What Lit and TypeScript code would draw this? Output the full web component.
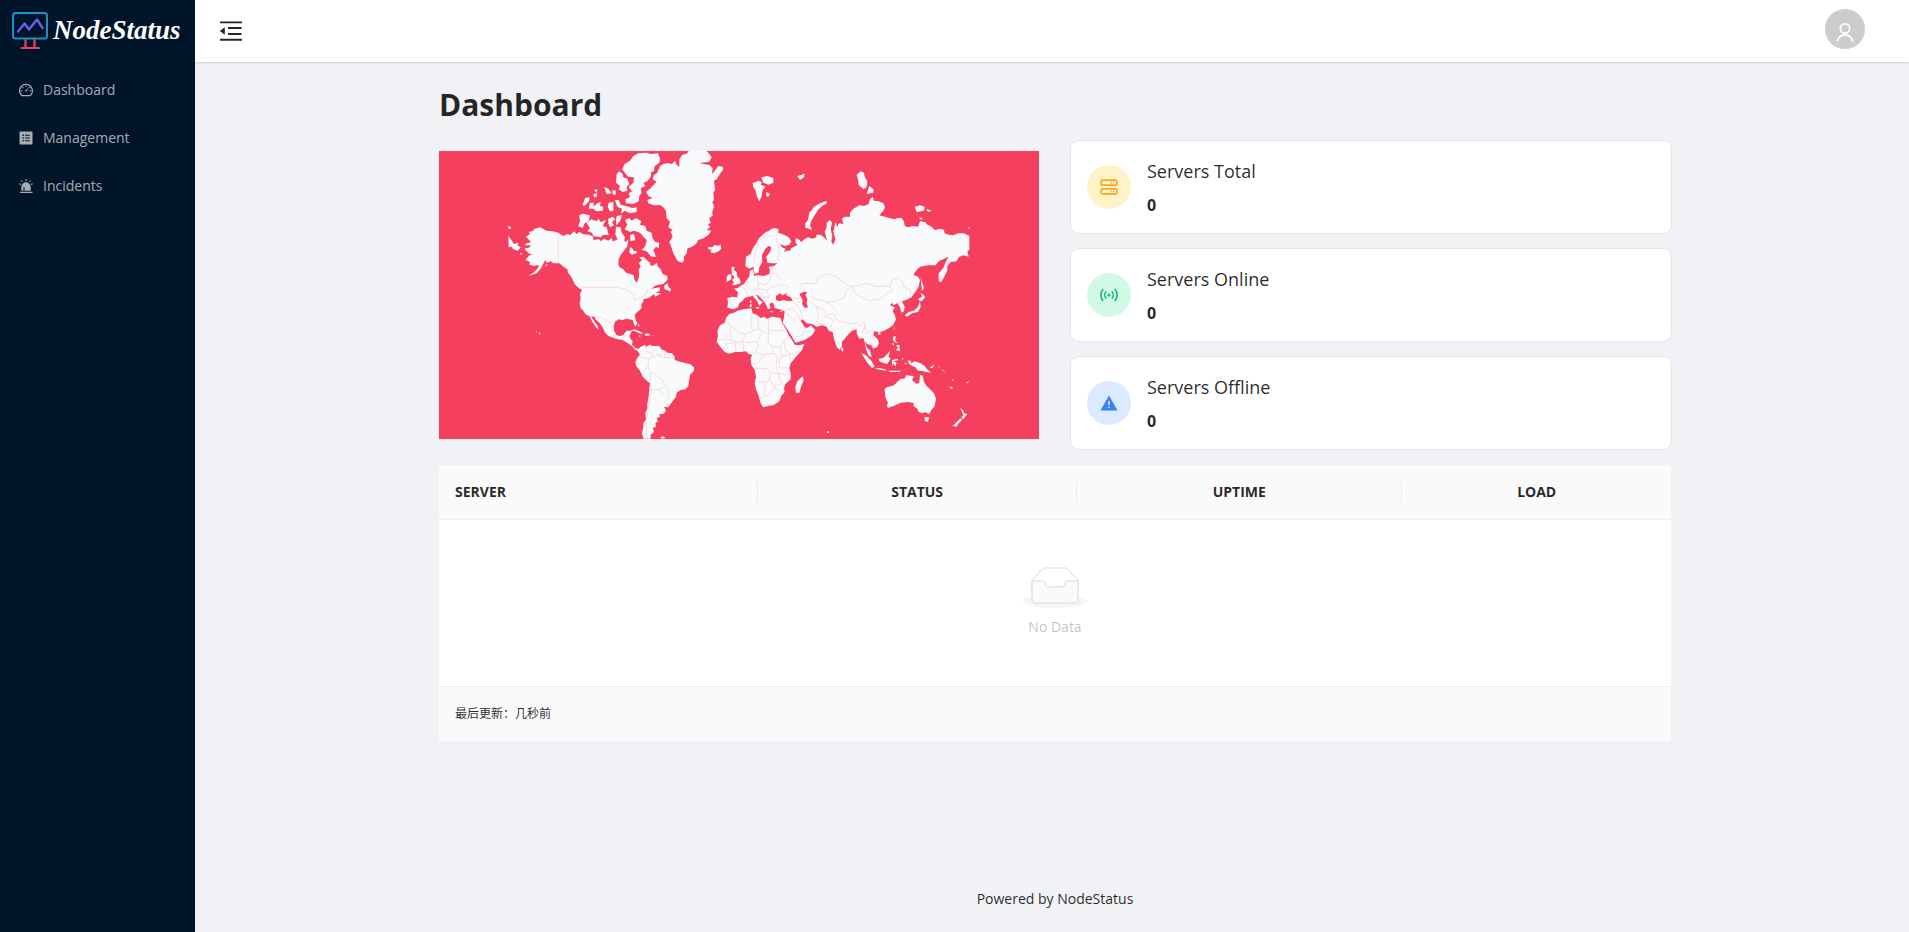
import { LitElement, html, svg, css } from "lit";
import { customElement, property } from "lit/decorators.js";

const dashboardIcon = svg`<svg class="icon" viewBox="0 0 1024 1024" aria-hidden="true"><path fill="currentColor" d="M924.8 385.6a446.7 446.7 0 00-96-142.4 446.7 446.7 0 00-142.4-96C631.1 123.8 572.5 112 512 112s-119.1 11.8-174.4 35.2a446.7 446.7 0 00-142.4 96 446.7 446.7 0 00-96 142.4C75.8 440.9 64 499.5 64 560c0 132.7 58.3 257.7 159.9 343.1l1.7 1.4c5.8 4.8 13.1 7.5 20.6 7.5h531.7c7.5 0 14.8-2.7 20.6-7.5l1.7-1.4C901.7 817.7 960 692.7 960 560c0-60.5-11.9-119.1-35.2-174.4zM761.4 836H262.6A371.12 371.12 0 01140 560c0-99.4 38.7-192.8 109-263 70.3-70.3 163.7-109 263-109 99.4 0 192.8 38.7 263 109 70.3 70.3 109 163.7 109 263 0 105.6-44.5 205.5-122.6 276zM623.5 421.5a8.03 8.03 0 00-11.3 0L527.7 506c-18.7-5-39.4-.2-54.1 14.5a55.95 55.95 0 000 79.2 55.95 55.95 0 0079.2 0 55.87 55.87 0 0014.5-54.1l84.5-84.5c3.1-3.1 3.1-8.2 0-11.3l-28.3-28.3zM490 320h44c4.4 0 8-3.6 8-8v-80c0-4.4-3.6-8-8-8h-44c-4.4 0-8 3.6-8 8v80c0 4.4 3.6 8 8 8zm260 218v44c0 4.4 3.6 8 8 8h80c4.4 0 8-3.6 8-8v-44c0-4.4-3.6-8-8-8h-80c-4.4 0-8 3.6-8 8zm12.7-197.2l-31.1-31.1a8.03 8.03 0 00-11.3 0l-56.6 56.6a8.03 8.03 0 000 11.3l31.1 31.1c3.1 3.1 8.2 3.1 11.3 0l56.6-56.6c3.1-3.1 3.1-8.2 0-11.3zm-458.6-31.1a8.03 8.03 0 00-11.3 0l-31.1 31.1a8.03 8.03 0 000 11.3l56.6 56.6c3.1 3.1 8.2 3.1 11.3 0l31.1-31.1c3.1-3.1 3.1-8.2 0-11.3l-56.6-56.6zM262 530h-80c-4.4 0-8 3.6-8 8v44c0 4.4 3.6 8 8 8h80c4.4 0 8-3.6 8-8v-44c0-4.4-3.6-8-8-8z"/></svg>`;

const managementIcon = svg`<svg class="icon" viewBox="0 0 16 16" aria-hidden="true"><path fill="currentColor" fill-rule="evenodd" d="M2 1.5h12a.5.5 0 0 1 .5.5v12a.5.5 0 0 1-.5.5H2a.5.5 0 0 1-.5-.5V2a.5.5 0 0 1 .5-.5zM4.5 4.6v1.3h1.4V4.6zM7 4.8v1h4.8v-1zM4.500 7.300v1.300h1.400V7.300zM7 7.500v1h4.800v-1zM4.500 10v1.300h1.400V10zM7 10.200v1h4.800v-1z"/></svg>`;

const incidentsIcon = svg`<svg class="icon" viewBox="0 0 16 16" aria-hidden="true"><path fill="currentColor" fill-rule="evenodd" d="M3.300 12.800V9a4.700 4.700 0 0 1 9.400 0v3.800zM5.500 12.800h1V9H5.500zM2 13.700h12.500v1.300H2z"/><path fill="none" stroke="currentColor" stroke-width="1.100" d="M8 1v2M3.300 2.500l1.200 1.500M12.700 2.500l-1.200 1.500M1.300 5.700l1.700.7M14.700 5.700l-1.700.7"/></svg>`;

const foldIcon = svg`<svg class="fold-icon" viewBox="0 0 1024 1024" aria-hidden="true"><path fill="currentColor" d="M408 442h480c4.400 0 8-3.600 8-8v-56c0-4.400-3.600-8-8-8H408c-4.400 0-8 3.600-8 8v56c0 4.400 3.600 8 8 8zm-8 204c0 4.400 3.600 8 8 8h480c4.400 0 8-3.600 8-8v-56c0-4.400-3.600-8-8-8H408c-4.400 0-8 3.600-8 8v56zm504-486H120c-4.400 0-8 3.600-8 8v56c0 4.400 3.600 8 8 8h784c4.400 0 8-3.600 8-8v-56c0-4.400-3.600-8-8-8zm0 632H120c-4.400 0-8 3.600-8 8v56c0 4.400 3.600 8 8 8h784c4.400 0 8-3.600 8-8v-56c0-4.400-3.600-8-8-8zM115.400 518.900L271.700 642c5.800 4.600 14.400.5 14.400-6.900V388.900c0-7.400-8.500-11.500-14.400-6.900L115.400 505.100a8.740 8.740 0 0 0 0 13.800z"/></svg>`;

const logoMark = svg`<svg class="logo-mark" viewBox="0 0 36 38" aria-hidden="true" fill="none" stroke-linejoin="round" stroke-linecap="round"><rect x="1" y="1" width="34" height="25.500" rx="2.500" stroke="#1d8fc4" stroke-width="2"/><path d="M6 19.500L12.500 11.500l4.500 6 8-10 5.500 8.500" stroke="#6c5ce7" stroke-width="2.400"/><path d="M13.500 28v7.500M22.500 28v7.500M9.500 36h17.500" stroke="#e8435c" stroke-width="2.200"/></svg>`;

const serverIcon = svg`<svg class="stat-icon" viewBox="0 0 18 18" aria-hidden="true" fill="none" stroke="currentColor" stroke-width="1.700"><rect x="1.200" y="2.200" width="15.600" height="5" rx="1"/><rect x="1.200" y="10.800" width="15.600" height="5" rx="1"/><path d="M10.500 4.700h1.300M13 4.700h1.300M10.500 13.300h1.300M13 13.300h1.300"/></svg>`;

const signalIcon = svg`<svg class="stat-icon" viewBox="0 0 18 18" aria-hidden="true" fill="none" stroke="currentColor" stroke-width="1.600"><circle cx="9" cy="9" r="1.500" fill="currentColor" stroke="none"/><path d="M6.200 5.500a5 5 0 0 0 0 7M11.800 5.500a5 5 0 0 1 0 7M3.200 3a9 9 0 0 0 0 12M14.800 3a9 9 0 0 1 0 12"/></svg>`;

const warnIcon = svg`<svg class="stat-icon" viewBox="0 0 18 18" aria-hidden="true"><path fill="currentColor" d="M9 1.500L17.600 16.500H.4z"/><path d="M9 7v4M9 12.500v1.600" stroke="#dbeafe" stroke-width="1.500"/></svg>`;

const emptyIcon = svg`<svg class="empty-icon" viewBox="0 0 64 41" aria-hidden="true"><g transform="translate(0 1)" fill="none" fill-rule="evenodd"><ellipse fill="#f5f5f5" cx="32" cy="33" rx="32" ry="7"/><g stroke="#d9d9d9"><path d="M55 12.760L44.854 1.258C44.367.474 43.656 0 42.907 0H21.093c-.749 0-1.460.474-1.947 1.257L9 12.761V22h46v-9.240z"/><path fill="#fafafa" d="M41.613 15.931c0-1.605.994-2.930 2.227-2.931H55v18.137C55 33.260 53.680 35 52.050 35h-40.100C10.320 35 9 33.259 9 31.137V13h11.160c1.233 0 2.227 1.323 2.227 2.928v.022c0 1.605 1.005 2.901 2.237 2.901h14.752c1.232 0 2.237-1.308 2.237-2.913v-.007z"/></g></g></svg>`;

/* Land outlines of the western hemisphere. */
const west = [
  // Greenland
  "M648 155L660 146 680 125 668 118 672 104 682 98 690 78 702 71 715 70 726 72 735 62 740 74 748 80 748 58 756 46 772 40 776 33 830 33 838 42 845 52 838 65 808 69 838 75 848 84 846 102 856 90 865 78 878 80 880 88 870 102 860 118 852 122 855 150 850 158 852 180 847 186 852 200 846 218 849 226 838 235 842 250 834 252 840 262 830 270 844 272 836 284 822 294 805 300 798 312 790 318 772 326 770 340 762 350 762 362 756 368 742 362 736 350 730 340 724 322 718 306 728 290 722 275 728 270 715 262 720 245 710 235 708 212 700 202 690 195 672 196 655 190 652 180 668 174 655 168z",
  // Ellesmere and Axel Heiberg
  "M576 88L584 72 600 62 610 48 625 40 650 38 662 42 684 40 690 55 688 68 674 78 672 92 662 98 664 108 652 124 640 128 646 138 632 145 635 158 628 168 626 184 610 192 588 190 586 178 600 172 596 160 606 154 596 140 610 128 612 112 594 110z",
  "M560 102L568 94 578 102 580 112 592 116 598 132 590 140 592 152 578 156 566 148 570 138 558 128z",
  // Canadian Arctic islands
  "M522 140L535 146 545 160 530 162zM547 150L558 152 556 166 548 162zM492 150L502 148 500 158zM490 162L502 160 500 170 492 172zM465 175L478 171 478 182 464 197 457 196z",
  "M480 188L492 188 490 200 502 190 512 186 510 198 520 200 518 212 500 214 488 206 476 206zM536 188L550 186 551 212 540 214 533 200zM555 180L566 180 572 194 588 198 606 204 620 202 620 216 600 220 584 212 572 222 576 206 562 200z",
  "M448 226L458 221 480 226 476 244 464 250 458 264 445 258 450 244zM470 250L484 238 500 244 505 236 512 246 528 240 518 258 530 262 536 285 520 284 512 292 490 288 486 278 472 274 480 264z",
  "M535 236L548 230 556 238 546 246 552 256 540 262 535 250zM560 228L576 225 572 240 560 256 558 242zM558 260L572 262 574 276 585 292 582 304 568 296 556 285z",
  "M585 240L598 234 605 242 618 234 634 244 630 254 646 258 650 272 665 278 668 295 676 306 688 308 686 325 678 320 670 330 678 350 664 350 650 334 635 330 646 318 650 300 640 290 630 278 612 272 600 276 584 268 592 254zM600 322L612 326 622 338 606 344 598 338zM600 285L612 282 616 300 602 304z",
  // Mainland North America
  "M288 290L300 282 296 276 310 272 312 267 330 262 350 272 368 274 385 278 400 288 412 282 420 285 432 274 440 282 448 276 460 283 478 284 490 290 490 300 508 298 512 304 522 296 535 302 545 294 548 304 562 300 558 285 566 280 572 294 588 306 596 296 592 318 584 330 572 344 566 358 565 376 572 384 580 388 588 398 600 402 612 406 612 416 620 428 626 414 628 400 626 390 632 378 626 370 636 360 628 352 640 350 650 360 660 368 662 378 672 376 680 368 684 380 692 388 698 402 712 408 712 420 700 432 678 436 664 446 690 442 690 452 676 458 694 460 676 470 672 462 656 474 640 478 640 486 634 492 635 505 622 516 614 524 617 540 622 550 616 560 612 552 608 540 590 536 578 540 566 538 555 545 551 558 552 572 560 586 572 588 580 584 590 572 606 572 598 588 602 598 608 602 606 614 616 624 625 626 630 634 616 630 606 618 594 610 578 600 560 597 535 588 524 576 518 562 508 548 496 538 494 530 484 530 494 546 502 556 508 570 498 562 486 544 480 530 466 522 460 512 452 504 449 490 452 476 450 462 456 450 440 438 434 432 424 410 414 398 412 388 400 380 388 370 370 370 362 364 350 368 346 360 338 374 334 384 320 400 295 408 310 398 324 384 326 374 312 378 298 374 300 366 286 360 298 346 308 345 296 340 283 326 300 322 302 316 284 316 290 310 303 306z",
  // Vancouver Island, Newfoundland, Aleutians and Chukotka
  "M433 432L446 438 456 446 450 446zM704 448L702 438 712 430 716 442 723 446 720 455 712 450zM235 288L244 300 252 312 266 308 262 316 272 322 264 332 250 328 244 320 236 322zM235 259L242 260 242 267 235 266zM270 338L278 342 270 344zM348 372L353 374 345 382z",
  // Caribbean and Hawaii
  "M602 572L614 568 628 574 640 580 632 582 616 574zM644 582L654 580 662 586 646 588zM626 586L634 588 628 590zM668 586L673 587 668 589zM622 552L628 554 628 562zM318 572L322 574 318 576zM326 577L332 580 329 585z",
  // South America
  "M622 632L630 622 645 614 648 620 660 614 668 618 688 618 694 628 706 632 712 638 726 640 734 650 734 660 745 664 762 668 780 672 792 682 792 692 780 704 778 718 775 738 766 748 752 750 740 758 738 770 728 784 720 794 714 802 702 800 708 812 700 822 688 822 690 830 680 834 684 844 676 850 678 860 668 864 672 876 662 884 662 896 640 896 636 880 640 860 640 850 648 838 646 820 652 805 652 790 656 770 658 745 660 730 650 722 638 710 630 692 620 680 616 668 620 656 630 644zM692 892L700 889 706 894 694 896z",
];

/* Land outlines of Europe, Asia, Africa and Oceania. */
const east = [
  // Eurasia
  "M166 378L168 350 182 342 188 326 200 308 206 296 218 284 228 276 238 272 244 266 256 264 266 268 264 278 282 284 296 292 304 304 298 314 284 318 270 312 276 322 286 326 282 336 290 332 300 332 304 324 322 316 316 306 317 295 326 298 334 306 345 296 355 292 366 296 380 292 378 284 392 284 402 292 412 302 408 290 404 275 410 262 410 248 420 240 426 248 422 268 427 288 424 306 430 314 436 298 430 276 436 246 442 262 446 250 460 252 456 236 464 230 480 230 480 218 490 206 508 196 522 198 536 192 540 178 548 170 552 182 566 184 580 190 585 202 580 212 568 226 590 232 612 238 622 234 634 234 642 244 644 258 654 262 668 258 684 260 690 244 706 246 712 254 722 258 734 270 752 266 762 270 764 280 776 284 790 286 805 280 822 280 838 288 838 330 832 334 836 350 820 346 806 352 800 364 782 366 772 378 772 392 764 408 754 426 746 424 746 400 760 384 766 368 776 350 760 358 748 362 736 376 714 376 690 380 680 390 670 404 684 410 690 420 686 440 676 456 664 472 648 480 636 484 644 500 642 514 634 518 630 502 622 490 610 496 608 488 600 496 614 502 608 514 614 524 618 538 610 554 598 564 582 572 570 576 572 584 564 576 552 574 550 586 562 596 567 608 562 620 550 626 544 616 532 612 526 602 530 622 540 632 546 652 536 648 528 628 526 612 520 594 508 596 500 580 500 568 486 572 476 582 464 596 456 606 456 618 448 630 440 620 432 598 428 576 416 572 410 560 396 556 380 560 366 552 350 550 338 538 332 542 344 562 352 564 362 556 376 570 366 586 344 600 316 608 306 590 292 568 278 548 282 532 284 514 268 508 254 504 250 490 244 488 238 492 242 504 234 508 226 490 216 478 204 466 198 464 206 478 218 486 208 498 202 484 188 468 176 470 164 474 158 482 148 490 144 502 130 508 112 503 114 488 112 474 128 470 142 472 144 456 132 446 144 444 150 438 162 432 170 420 178 410 180 392 190 388 192 408 202 406 222 408 238 402 240 390 236 380 252 378 262 370 246 370 232 368 229 350 240 336 244 322 236 318 226 326 216 346 217 366 208 382 206 398 194 402 190 380 178 386z",
  // Africa
  "M118 522L132 518 142 512 160 508 184 505 188 520 200 524 212 534 222 530 230 536 246 530 272 534 276 548 288 568 296 586 306 600 314 614 328 616 343 611 336 630 318 650 302 670 298 684 302 700 302 718 286 732 282 744 284 756 274 768 268 784 250 796 236 797 220 802 212 790 206 768 198 748 194 730 198 710 194 690 184 674 182 658 186 644 176 642 168 634 150 636 136 636 118 641 104 636 92 622 80 606 84 588 82 572 90 556 104 548 108 534z",
  // Madagascar and Sri Lanka
  "M338 709L341 720 334 738 328 758 318 758 316 740 322 724zM454 620L461 628 458 635 453 630z",
  // British Isles
  "M124 382L134 380 132 390 140 396 142 410 150 418 152 430 138 434 124 436 132 428 126 420 134 412 126 404zM114 404L124 402 124 418 110 426 110 412z",
  // Iceland
  "M55 320L66 322 76 314 82 318 92 314 94 326 86 334 72 340 60 336 66 330 55 328z",
  // Svalbard and Franz Josef Land
  "M188 128L200 126 202 122 216 126 212 134 226 140 218 150 214 172 208 184 200 168 196 150 190 142zM214 112L232 108 250 114 250 128 236 134 220 128zM230 156L240 162 234 172 228 166zM322 108L334 104 344 101 342 112 330 120z",
  // Novaya Zemlya
  "M408 183L411 190 396 198 384 210 374 226 364 242 360 256 366 269 346 263 346 250 354 240 358 218 372 200 390 190z",
  // Severnaya Zemlya and New Siberian Islands
  "M500 104L512 94 522 98 524 110 532 124 530 142 520 148 506 134 504 118zM538 138L550 148 550 158 530 162 534 150zM674 200L690 196 704 200 702 212 680 216zM708 206L726 212 714 216zM686 232L698 234 694 240zM834 262L839 262 838 268z",
  // Sakhalin and Japan
  "M692 408L696 426 702 444 696 454 694 434zM690 484L684 476 696 470 692 458 704 468 704 474 696 482zM690 484L692 502 684 516 666 520 652 530 644 526 656 516 672 512 684 500z",
  // Taiwan, Hainan and the Philippines
  "M612 560L614 564 611 572zM564 580L572 578 566 586zM610 590L617 588 616 602 624 610 614 606 608 598zM618 616L628 614 630 634 618 630 624 624zM606 608L612 612 610 618z",
  // Indonesia
  "M514 640L526 644 544 662 554 680 546 684 532 668zM554 684L570 684 590 690 588 692 564 688zM594 692L620 692 634 692 628 696 600 696zM566 656L580 654 594 640 600 632 596 650 602 656 592 672 578 668 568 664zM606 660L622 656 626 660 610 664 620 668 616 680 610 670 606 678zM636 652L640 656 638 662zM642 668L654 672 646 672z",
  // New Guinea and Melanesia
  "M652 662L662 662 664 670 674 664 692 670 704 678 710 686 724 698 708 696 694 692 684 692 676 682 660 674zM718 682L728 678 734 672 728 684zM742 678L752 684 746 682zM754 688L770 698 758 692zM778 738L790 745 782 746zM784 716L792 720 788 722zM828 728L838 722 832 730z",
  // Australia
  "M584 748L590 742 612 736 624 724 632 716 644 716 648 706 672 708 666 720 680 732 688 728 690 704 698 708 702 726 708 736 720 748 732 760 738 776 734 798 724 810 718 822 704 816 698 820 686 816 682 806 670 798 672 790 656 786 632 788 616 796 594 804 590 796 594 790 586 772z",
  // Tasmania and New Zealand
  "M704 832L718 832 714 846 704 842zM810 802L820 812 822 820 832 822 820 838 814 832 820 826zM812 834L816 840 804 852 800 860 788 858 800 846zM410 874L416 874 418 879 412 879z",
  // Mediterranean islands
  "M180 480L184 482 184 490 180 488zM180 492L186 494 184 502 179 500zM194 502L208 502 206 507zM238 514L250 514 248 518zM270 514L278 512 274 517z",
];

const westBorders =
  "M385 278V370L412 384M456 442H560L580 446 600 456 612 466 612 480 630 474 648 462 655 444M480 530L510 532 530 540 550 560M578 596L590 584M645 620L652 636 668 640 664 652 656 656 654 680 640 694M668 655L684 642 700 652 732 655M686 640L690 652M706 636L704 652M620 668L630 674M630 650L654 656M654 680L662 698 680 706 700 724 714 750 718 770 704 792M662 700L660 728 664 750 684 748 704 742M664 750L656 800 648 850 650 896M684 748L704 764";
const eastBorders =
  "M192 370L194 340 210 300 228 286 246 290M262 268L258 290 268 330 262 366M240 380L252 384 246 398 262 404 270 420M202 408L204 430 226 434 240 420 244 400M176 420L170 440 184 452M150 438L168 448 172 468M184 452L204 446 206 430M204 446L230 450 250 440 274 432 300 442M206 456L222 470 240 474M230 450L238 474M120 472L124 500M128 472L144 476M222 470L228 490M330 440L336 430 380 430 384 412 410 402 440 410 456 424 484 440 470 450 460 476 430 484 410 486 380 478 360 466M484 440L530 430 560 440 600 438 606 420 622 414 638 424 642 442 662 450 660 470M484 440L500 466 540 482 574 476 590 460 606 452 600 438M620 490L634 484M360 482L376 500 400 508 408 526 430 520 440 540 480 552 504 548 510 560 524 546 526 560 514 580M410 486L430 500 440 514M380 500L386 530 380 546 404 556M400 528L430 540 420 566M306 480L320 496 330 510 338 534M286 510L310 506 324 526 332 542M284 514L296 528 316 540M316 608L312 596 340 584 348 566M524 560L530 578 544 572 552 574M540 596L558 596M186 520L182 550 188 572 166 582 150 580 120 556 106 534M120 556L124 600 84 598M188 572L206 568 204 540 196 528M206 568L236 582V536M240 572H286M236 582L234 610 246 620 270 622 282 604 294 586M166 582L158 604 136 608 104 612M124 600L140 604M108 614L116 630M136 612L138 636M158 604L162 634M166 608L200 604 206 620 190 646M206 600L212 580M246 620L250 640 220 644 200 638M282 604L286 630 306 644 330 632M270 622L276 650 300 644 302 668M220 644L212 660 200 672 186 672M250 640L262 648 258 680 266 700 240 700 232 686 196 684M276 650L266 660 268 684 298 684M266 700L286 704 300 700M240 700V720L226 726 196 726M226 726L222 768 236 766 254 742 266 734 280 730M240 720L256 742M266 700L272 726M222 768L210 776M254 742L272 756M300 470L318 478 330 474M320 488L330 486";
const seas =
  "M328 462L340 456 352 456 346 466 352 476 350 490 354 502 344 504 336 492 338 480zM258 480L258 468 270 460 278 466 292 458 288 466 302 472 308 482 296 484 280 480 268 484z";
const westWater =
  "M598 306L614 314 610 322 622 330 612 334 604 320z";

@customElement("world-map")
export class WorldMap extends LitElement {
  static styles = css`
    :host { display: block; }
    .map { display: block; width: 100%; height: auto; background: #f43f5e; }
    .land { fill: #f8fafc; }
    .border { fill: none; stroke: #f43f5e; stroke-opacity: 0.4; stroke-width: 1.3; stroke-linejoin: round; }
    .sea { fill: #f43f5e; }
  `;

  render() {
    return html`<svg class="map" viewBox="0 0 600 288" role="img" aria-label="World map">
      <g transform="translate(-9 -11) scale(.33333)">
        ${west.map((d) => svg`<path class="land" d=${d}></path>`)}
        <path class="border" d=${westBorders}></path>
        <path class="sea" d=${westWater}></path>
      </g>
      <g transform="translate(251 -11) scale(.33333)">
        ${east.map((d) => svg`<path class="land" d=${d}></path>`)}
        <path class="border" d=${eastBorders}></path>
        <path class="sea" d=${seas}></path>
      </g>
    </svg>`;
  }
}

@customElement("stat-card")
export class StatCard extends LitElement {
  @property() label = "";
  @property() tone = "amber";
  @property({ type: Number }) value = 0;

  static styles = css`
    :host { display: block; }
    .card {
      display: flex;
      align-items: center;
      gap: 16px;
      padding: 16px;
      background: #fff;
      border-radius: 8px;
      box-shadow: 0 0 0 1px rgba(0, 0, 0, 0.05);
    }
    .badge { display: grid; place-items: center; width: 44px; height: 44px; border-radius: 50%; }
    .amber { background: #fef3c7; color: #f5a623; }
    .green { background: #d1fae5; color: #10b981; }
    .blue { background: #dbeafe; color: #3b82f6; }
    .stat-icon { display: block; width: 18px; height: 18px; }
    .label { margin: 0 0 8px; font-size: 18px; line-height: 28px; }
    .value { margin: 0; font-size: 16px; line-height: 24px; font-weight: 700; }
  `;

  render() {
    const icon = this.tone === "amber" ? serverIcon : this.tone === "green" ? signalIcon : warnIcon;
    return html`<div class="card">
      <div class="badge ${this.tone}">${icon}</div>
      <div>
        <p class="label">${this.label}</p>
        <p class="value">${this.value}</p>
      </div>
    </div>`;
  }
}

@customElement("app-root")
export class AppRoot extends LitElement {
  static styles = css`
    :host {
      display: flex;
      min-height: 100vh;
      background: #f0f2f5;
      color: rgba(0, 0, 0, 0.85);
      font: 14px/22px "Segoe UI", "Open Sans", "Noto Sans", "Noto Sans CJK SC", sans-serif;
    }
    .sider { flex: 0 0 195px; background: #001529; }
    .logo { display: flex; align-items: center; gap: 5px; height: 62px; padding-left: 12px; color: #fff; text-decoration: none; }
    .logo-mark { flex: none; width: 36px; height: 38px; }
    .logo-name { font: italic bold 27px/36px "Liberation Serif", serif; padding-bottom: 2px; }
    .menu { list-style: none; margin: 4px 0 0; padding: 0; }
    .item { display: flex; align-items: center; gap: 9px; height: 48px; padding-left: 18px; color: rgba(255, 255, 255, 0.65); text-decoration: none; }
    .icon { width: 16px; height: 16px; }
    .main { flex: 1; min-width: 0; display: flex; flex-direction: column; }
    .header {
      display: flex;
      align-items: center;
      justify-content: space-between;
      height: 62px;
      padding: 0 44px 0 22px;
      background: #fff;
      box-shadow: 0 1px 2px rgba(0, 0, 0, 0.15);
    }
    .fold, .user { display: grid; place-items: center; border: 0; padding: 0; cursor: pointer; }
    .fold { background: none; color: rgba(0, 0, 0, 0.85); }
    .fold-icon { display: block; width: 28px; height: 28px; }
    .user { width: 40px; height: 40px; border-radius: 50%; background: #ccc; color: #fff; margin-bottom: 4px; }
    .user-icon { display: block; width: 20px; height: 20px; padding-top: 6px; }
    .content { flex: 1; box-sizing: border-box; width: 100%; max-width: 1284px; margin: 0 auto; padding: 23px 23px 0 29px; }
    .title { margin: 0 0 15px; font-size: 30px; line-height: 40px; font-weight: 700; }
    .overview { display: grid; grid-template-columns: 1fr 1fr; gap: 32px; align-items: center; margin-bottom: 16px; }
    .stats { display: grid; gap: 16px; padding-top: 1px; }
    .table { width: 100%; border-collapse: collapse; table-layout: fixed; background: #fff; }
    .server, .status { width: 25.9%; }
    .uptime { width: 26.4%; }
    .table th { height: 54px; padding: 0; background: #fafafa; border-bottom: 1px solid #f0f0f0; font-weight: 700; }
    .cell { display: block; border-right: 1px solid #ebebeb; }
    .table th:first-child .cell { text-align: left; padding-left: 16px; }
    .table th:last-child .cell { border-right: 0; }
    .empty { padding: 47px 0 48px; text-align: center; color: rgba(0, 0, 0, 0.25); border-bottom: 1px solid #f0f0f0; }
    .empty-icon { display: block; margin: 0 auto 8px; width: 64px; height: 41px; }
    .updated { height: 54px; padding: 0 16px; background: #fafafa; font-size: 12px; }
    .footer { padding: 24px 23px 22px 29px; text-align: center; }
    .footer a { color: inherit; text-decoration: none; }
  `;

  render() {
    return html`
      <aside class="sider">
        <a class="logo" href="#">${logoMark}<span class="logo-name">NodeStatus</span></a>
        <nav>
          <ul class="menu">
            <li><a class="item" href="#dashboard">${dashboardIcon}<span>Dashboard</span></a></li>
            <li><a class="item" href="#management">${managementIcon}<span>Management</span></a></li>
            <li><a class="item" href="#incidents">${incidentsIcon}<span>Incidents</span></a></li>
          </ul>
        </nav>
      </aside>
      <div class="main">
        <header class="header">
          <button class="fold" aria-label="Collapse menu">${foldIcon}</button>
          <button class="user" aria-label="Account">
            <svg class="user-icon" viewBox="0 0 20 20" fill="none" stroke="currentColor" stroke-width="1.7" aria-hidden="true"><circle cx="10" cy="6.500" r="4.700"/><path d="M2.200 19.500a7.900 7.900 0 0 1 15.600 0"/></svg>
          </button>
        </header>
        <main class="content">
          <h1 class="title">Dashboard</h1>
          <section class="overview">
            <world-map></world-map>
            <div class="stats">
              <stat-card tone="amber" label="Servers Total"></stat-card>
              <stat-card tone="green" label="Servers Online"></stat-card>
              <stat-card tone="blue" label="Servers Offline"></stat-card>
            </div>
          </section>
          <table class="table">
            <thead>
              <tr>
                <th class="server"><span class="cell">SERVER</span></th>
                <th class="status"><span class="cell">STATUS</span></th>
                <th class="uptime"><span class="cell">UPTIME</span></th>
                <th><span class="cell">LOAD</span></th>
              </tr>
            </thead>
            <tbody>
              <tr><td class="empty" colspan="4">${emptyIcon}No Data</td></tr>
            </tbody>
            <tfoot>
              <tr><td class="updated" colspan="4">最后更新：几秒前</td></tr>
            </tfoot>
          </table>
        </main>
        <footer class="footer">Powered by <a href="#">NodeStatus</a></footer>
      </div>
    `;
  }
}
